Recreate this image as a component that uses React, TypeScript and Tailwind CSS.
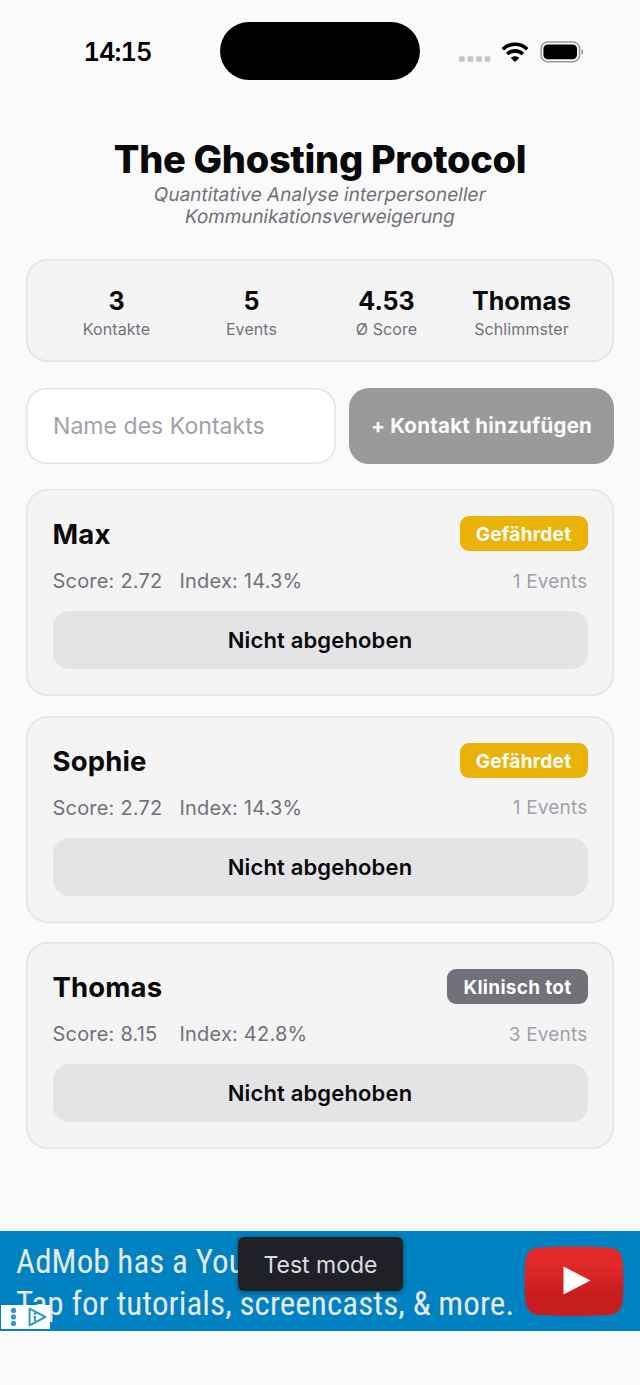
type Contact = {
  name: string;
  score: string;
  index: string;
  status: string;
  events: number;
};

const stats = [
  { value: '3', label: 'Kontakte' },
  { value: '5', label: 'Events' },
  { value: '4.53', label: 'Ø Score' },
  { value: 'Thomas', label: 'Schlimmster' },
];

const contacts: Contact[] = [
  { name: 'Max', score: '2.72', index: '14.3%', status: 'Gefährdet', events: 1 },
  { name: 'Sophie', score: '2.72', index: '14.3%', status: 'Gefährdet', events: 1 },
  { name: 'Thomas', score: '8.15', index: '42.8%', status: 'Klinisch tot', events: 3 },
];

function StatusBar() {
  return (
    <div className="grid h-[102px] grid-cols-[220px_200px_220px] items-center">
      <time className="pt-[2px] pl-[15px] text-center text-[25.5px] leading-8 font-semibold tracking-[-1px] text-black tabular-nums">14:15</time>
      <div className="h-[58px] w-[200px] rounded-full bg-black" />
      <div className="flex items-center pt-px pl-[39px]">
        <svg className="mt-[15px]" width="32" height="6" viewBox="0 0 32 6" fill="#c6c6c8">
          <rect x="0" y="0.3" width="5.6" height="5.4" rx="1.4" />
          <rect x="8.6" y="0.3" width="5.6" height="5.4" rx="1.4" />
          <rect x="17.2" y="0.3" width="5.6" height="5.4" rx="1.4" />
          <rect x="25.8" y="0.3" width="5.6" height="5.4" rx="1.4" />
        </svg>
        <svg className="ml-[10px]" width="28" height="20" viewBox="0 0 28 20" fill="none" stroke="#000" strokeWidth="3.6">
          <path d="M1.8 7.2C8.6 0.6 19.4 0.6 26.2 7.2" />
          <path d="M6.2 12C10.6 7.8 17.4 7.8 21.8 12" />
          <path d="M14 20L9.8 15.9C12.2 13.8 15.8 13.8 18.2 15.9Z" fill="#000" stroke="none" />
        </svg>
        <svg className="ml-[11px]" width="44" height="22" viewBox="0 0 44 22">
          <rect x="1.1" y="1.1" width="38.4" height="19.6" rx="6.4" fill="none" stroke="#98989a" strokeWidth="1.5" />
          <rect x="3.4" y="3.6" width="33.6" height="14.6" rx="4.2" fill="#000" />
          <path d="M41.4 7.8C43.9 8.8 43.9 13 41.4 14Z" fill="#98989a" />
        </svg>
      </div>
    </div>
  );
}

function ContactCard({ name, score, index, status, events }: Contact) {
  const badge = events >= 3 ? 'bg-[#71717a]' : 'bg-[#eab308]';
  return (
    <article className="h-[207px] rounded-[22px] bg-[#f4f4f5] px-[26.5px] pt-[27px] inset-ring-[1.6px] inset-ring-[#e4e4e7]">
      <div className="flex h-[35px] items-center justify-between">
        <h2 className="pt-[2px] text-[27.5px] leading-[35px] font-[650] tracking-[0.15px] text-[#09090b]">{name}</h2>
        <span className={`h-[35px] rounded-[9px] px-4 text-[19px] leading-[37px] font-[650] tracking-[0.3px] text-white ${badge}`}>
          {status}
        </span>
      </div>
      <div className="mt-[16px] flex h-7 items-center text-[20px] leading-7 tracking-[0.2px] text-[#71717a]">
        <span className="min-w-[127px]">Score: {score}</span>
        <span>Index: {index}</span>
        <span className="ml-auto pt-px text-[19px] text-[#a1a1aa]">{events} Events</span>
      </div>
      <button className="mt-[16px] block h-[58px] w-full rounded-2xl bg-[#e4e4e7] text-[22px] leading-[58px] font-[570] tracking-[0.15px] text-[#09090b]">
        Nicht abgehoben
      </button>
    </article>
  );
}

function AdBanner() {
  return (
    <aside className="relative flex h-[100px] items-center overflow-hidden bg-[#0081c1]">
      <p className="pt-[3px] pl-4 font-['Roboto'] text-[33px] leading-[42px] whitespace-pre tracking-[0.1px] text-[#e4eaee] [font-stretch:75%]">
        {'AdMob has a You\nTap for tutorials, screencasts, & more.'}
      </p>
      <svg className="absolute top-[15px] left-[524px]" width="100" height="71" viewBox="0 0 100 71">
        <defs>
          <linearGradient id="play" x1="0" y1="0" x2="0" y2="1">
            <stop offset="0.3" stopColor="#df2827" />
            <stop offset="0.7" stopColor="#c71d1e" />
          </linearGradient>
        </defs>
        <path
          d="M14 1.8Q50-0.8 86 1.8Q97 2.5 98.5 14Q100.5 35 98.5 56Q97 67.5 86 68.8Q50 71.5 14 68.8Q3 67.5 1.5 56Q-0.5 35 1.5 14Q3 2.5 14 1.8Z"
          fill="url(#play)"
        />
        <path d="M39.5 20.5L66.5 34.5L39.5 48.5Z" fill="#fff" />
      </svg>
      <div className="absolute top-[6px] left-[238px] flex h-[54px] w-[165px] items-center justify-center rounded-[6px] bg-[#202124] pt-[2px] text-[23px] text-[#dcdde0] shadow-[0_1px_4px_1px_rgba(0,0,0,0.3)]">
        Test mode
      </div>
      <div className="absolute top-[74px] left-[1px] h-6 w-[49px] bg-white">
        <svg width="49" height="24" viewBox="0 0 49 24" fill="#3398c6">
          <circle cx="12.5" cy="5.4" r="2.6" />
          <circle cx="12.5" cy="11.9" r="2.6" />
          <circle cx="12.5" cy="18.4" r="2.6" />
          <path d="M28.6 3.6V20.4L44.4 12Z" fill="none" stroke="#3398c6" strokeWidth="2" strokeLinejoin="round" />
          <circle cx="34" cy="8.8" r="1.3" />
          <path d="M32.4 11H35V16.2H33V12.6H32.4Z" />
        </svg>
      </div>
    </aside>
  );
}

export default function App() {
  return (
    <div className="flex h-[1385px] w-[640px] flex-col overflow-hidden bg-[#fafafa] font-['Inter','Liberation_Sans',sans-serif]">
      <StatusBar />
      <main className="flex flex-1 flex-col px-[26px]">
        <header className="flex flex-col items-center pt-[34px]">
          <h1 className="text-[38px] leading-[47px] font-extrabold tracking-[-0.3px] text-[#09090b]">The Ghosting Protocol</h1>
          <p className="-skew-x-[10deg] text-[19px] leading-[23px] tracking-[0.02px] text-[#71717a]">Quantitative Analyse interpersoneller</p>
          <p className="-skew-x-[10deg] text-[19px] leading-[22px] tracking-[-0.08px] text-[#71717a]">Kommunikationsverweigerung</p>
        </header>
        <section className="mt-[31px] grid h-[103px] grid-cols-4 rounded-[22px] bg-[#f4f4f5] pr-[25px] pl-[23px] pt-[27px] text-center inset-ring-[1.6px] inset-ring-[#e4e4e7]">
          {stats.map((s) => (
            <div key={s.label}>
              <p className="text-[25px] leading-[31px] font-[660] text-[#09090b]">{s.value}</p>
              <p className="text-[16px] leading-[25px] tracking-[0.1px] text-[#71717a]">{s.label}</p>
            </div>
          ))}
        </section>
        <form className="mt-[26px] flex h-[76px] gap-[13px]">
          <input
            className="w-[310px] rounded-[20px] bg-white px-[27px] pt-px text-[23px] tracking-[0.05px] inset-ring-[1.6px] inset-ring-[#e4e4e7] placeholder:text-[#a1a1aa]"
            placeholder="Name des Kontakts"
          />
          <button type="button" className="flex-1 rounded-[20px] bg-[#9a9a9a] pt-px text-[20.5px] font-[650] tracking-[0.25px] whitespace-nowrap text-[#fafafa]">
            + Kontakt hinzufügen
          </button>
        </form>
        <section className="mt-[25px] flex flex-col gap-[19.5px]">
          {contacts.map((c) => (
            <ContactCard key={c.name} {...c} />
          ))}
        </section>
      </main>
      <AdBanner />
      <div className="h-[54px] shrink-0" />
    </div>
  );
}
